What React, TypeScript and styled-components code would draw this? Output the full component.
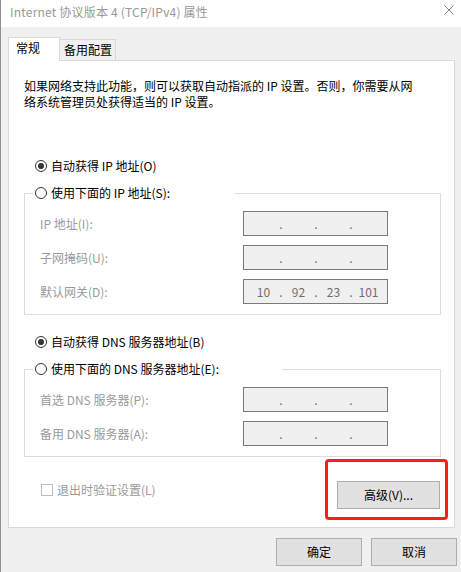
import React from 'react';
import styled, { createGlobalStyle } from 'styled-components';

const GlobalStyle = createGlobalStyle`
  html, body {
    margin: 0;
    padding: 0;
    background: #f0f0f0;
  }

  body {
    font-family: "Noto Sans CJK SC", "Noto Sans", sans-serif;
    font-size: 12px;
    color: #000;
  }
`;

const Window = styled.div`
  width: 461px;
  height: 572px;
  box-sizing: border-box;
  border-left: 1px solid #8f8f8f;
  background: #f0f0f0;
  display: flex;
  flex-direction: column;
  overflow: hidden;
`;

const TitleBar = styled.div`
  height: 27px;
  flex: none;
  background: #fff;
  display: flex;
  justify-content: space-between;
  align-items: flex-start;
  padding: 0 7px 0 9px;
`;

const Title = styled.span`
  margin-top: 4px;
  line-height: 16px;
  color: #999;
  white-space: nowrap;
  letter-spacing: 0.2px;
`;

const CloseIcon = styled.svg`
  margin-top: 5px;
  width: 10px;
  height: 10px;
`;

const Body = styled.div`
  flex: 1;
  display: flex;
  flex-direction: column;
  padding: 10px 6px 0 7px;
`;

const TabStrip = styled.div`
  display: flex;
  align-items: flex-end;
  margin-bottom: -1px;
  position: relative;
  z-index: 1;
`;

const Tab = styled.div<{ $active?: boolean }>`
  box-sizing: border-box;
  height: ${p => (p.$active ? 24 : 22)}px;
  width: ${p => (p.$active ? 52 : 56)}px;
  padding: 2px 0 0 ${p => (p.$active ? 7 : 4)}px;
  line-height: 16px;
  border: 1px solid #d9d9d9;
  border-left: ${p => (p.$active ? '1px solid #d9d9d9' : 'none')};
  border-bottom: ${p => (p.$active ? 'none' : '1px solid #d9d9d9')};
  background: ${p => (p.$active ? '#fff' : '#f0f0f0')};
  white-space: nowrap;
`;

const Panel = styled.div`
  box-sizing: border-box;
  width: 447px;
  height: 468px;
  border: 1px solid #d9d9d9;
  background: #fff;
  padding: 17px 6px 0 15px;
  display: flex;
  flex-direction: column;
`;

const Description = styled.p`
  margin: 0;
  line-height: 16px;
  white-space: nowrap;
`;

const RadioRow = styled.label<{ $gap: number }>`
  display: flex;
  align-items: center;
  gap: 4px;
  height: 16px;
  line-height: 16px;
  margin: ${p => p.$gap}px 0 0 11px;
  white-space: nowrap;
`;

const RadioDot = styled.span<{ $checked?: boolean }>`
  box-sizing: border-box;
  width: 12px;
  height: 12px;
  border-radius: 50%;
  border: 1px solid #333;
  background: #fff;
  display: flex;
  align-items: center;
  justify-content: center;

  &::after {
    content: '';
    width: 6px;
    height: 6px;
    border-radius: 50%;
    background: ${p => (p.$checked ? '#333' : 'transparent')};
  }
`;

const GroupBox = styled.fieldset`
  margin: 11px 7px 0 0;
  padding: 10px 0 10px 9px;
  border: 1px solid #dcdcdc;
  display: flex;
  flex-direction: column;
  gap: 9px;
`;

const GroupLegend = styled.legend<{ $width: number }>`
  box-sizing: border-box;
  width: ${p => p.$width}px;
  padding: 0 0 0 1px;
  height: 16px;
  display: flex;
  align-items: center;
  gap: 4px;
  line-height: 16px;
  white-space: nowrap;
`;

const FieldRow = styled.div`
  display: grid;
  grid-template-columns: 203px 145px;
  align-items: center;
  height: 25px;
  padding-left: 6px;
`;

const FieldLabel = styled.span`
  color: #9a9a9a;
  white-space: nowrap;
`;

const IpField = styled.div`
  box-sizing: border-box;
  width: 145px;
  height: 25px;
  border: 1px solid #7a7a7a;
  background: #f0f0f0;
  padding-left: 6px;
  display: grid;
  grid-template-columns: 27px 8px 27px 8px 27px 8px 27px;
  align-items: center;
  line-height: 16px;
  color: #6d6d6d;
  text-align: center;
`;

const BottomRow = styled.div`
  margin-top: 2px;
  display: flex;
  justify-content: space-between;
  align-items: center;
`;

const CheckRow = styled.label`
  display: flex;
  align-items: center;
  gap: 4px;
  margin-left: 17px;
  color: #9a9a9a;
  white-space: nowrap;
`;

const CheckBox = styled.span`
  box-sizing: border-box;
  width: 12px;
  height: 12px;
  border: 1px solid #bcbcbc;
  background: #fff;
`;

const Highlight = styled.div`
  border: 3px solid #ff1c1c;
  border-radius: 4px;
  padding: 19px 5px 8px 9px;
`;

const Button = styled.button<{ $width: number }>`
  box-sizing: border-box;
  width: ${p => p.$width}px;
  height: 28px;
  padding: 0;
  border: 1px solid #adadad;
  background: #e1e1e1;
  font: inherit;
  color: #000;
  line-height: 16px;
`;

const Footer = styled.div`
  margin: 10px -2px 0 0;
  display: flex;
  justify-content: flex-end;
  gap: 9px;
`;

const IpInput: React.FC<{ parts?: string[] }> = ({ parts = ['', '', '', ''] }) => (
  <IpField>
    {parts.map((part, i) => (
      <React.Fragment key={i}>
        {i > 0 && <span>.</span>}
        <span>{part}</span>
      </React.Fragment>
    ))}
  </IpField>
);

export default function App() {
  return (
    <>
      <GlobalStyle />
      <Window>
        <TitleBar>
          <Title>Internet 协议版本 4 (TCP/IPv4) 属性</Title>
          <CloseIcon viewBox="0 0 10 10">
            <path d="M0.5 0.5 L9.5 9.5 M9.5 0.5 L0.5 9.5" stroke="#8a8a8a" strokeWidth="1" fill="none" />
          </CloseIcon>
        </TitleBar>
        <Body>
          <TabStrip>
            <Tab $active>常规</Tab>
            <Tab>备用配置</Tab>
          </TabStrip>
          <Panel>
            <Description>
              如果网络支持此功能，则可以获取自动指派的 IP 设置。否则，你需要从网
              <br />
              络系统管理员处获得适当的 IP 设置。
            </Description>

            <RadioRow $gap={48}>
              <RadioDot $checked />
              自动获得 IP 地址(O)
            </RadioRow>
            <GroupBox>
              <GroupLegend $width={201}>
                <RadioDot />
                使用下面的 IP 地址(S):
              </GroupLegend>
              <FieldRow>
                <FieldLabel>IP 地址(I):</FieldLabel>
                <IpInput />
              </FieldRow>
              <FieldRow>
                <FieldLabel>子网掩码(U):</FieldLabel>
                <IpInput />
              </FieldRow>
              <FieldRow>
                <FieldLabel>默认网关(D):</FieldLabel>
                <IpInput parts={['10', '92', '23', '101']} />
              </FieldRow>
            </GroupBox>

            <RadioRow $gap={19}>
              <RadioDot $checked />
              自动获得 DNS 服务器地址(B)
            </RadioRow>
            <GroupBox>
              <GroupLegend $width={248}>
                <RadioDot />
                使用下面的 DNS 服务器地址(E):
              </GroupLegend>
              <FieldRow>
                <FieldLabel>首选 DNS 服务器(P):</FieldLabel>
                <IpInput />
              </FieldRow>
              <FieldRow>
                <FieldLabel>备用 DNS 服务器(A):</FieldLabel>
                <IpInput />
              </FieldRow>
            </GroupBox>

            <BottomRow>
              <CheckRow>
                <CheckBox />
                退出时验证设置(L)
              </CheckRow>
              <Highlight>
                <Button $width={103}>高级(V)...</Button>
              </Highlight>
            </BottomRow>
          </Panel>
          <Footer>
            <Button $width={86}>确定</Button>
            <Button $width={86}>取消</Button>
          </Footer>
        </Body>
      </Window>
    </>
  );
}
